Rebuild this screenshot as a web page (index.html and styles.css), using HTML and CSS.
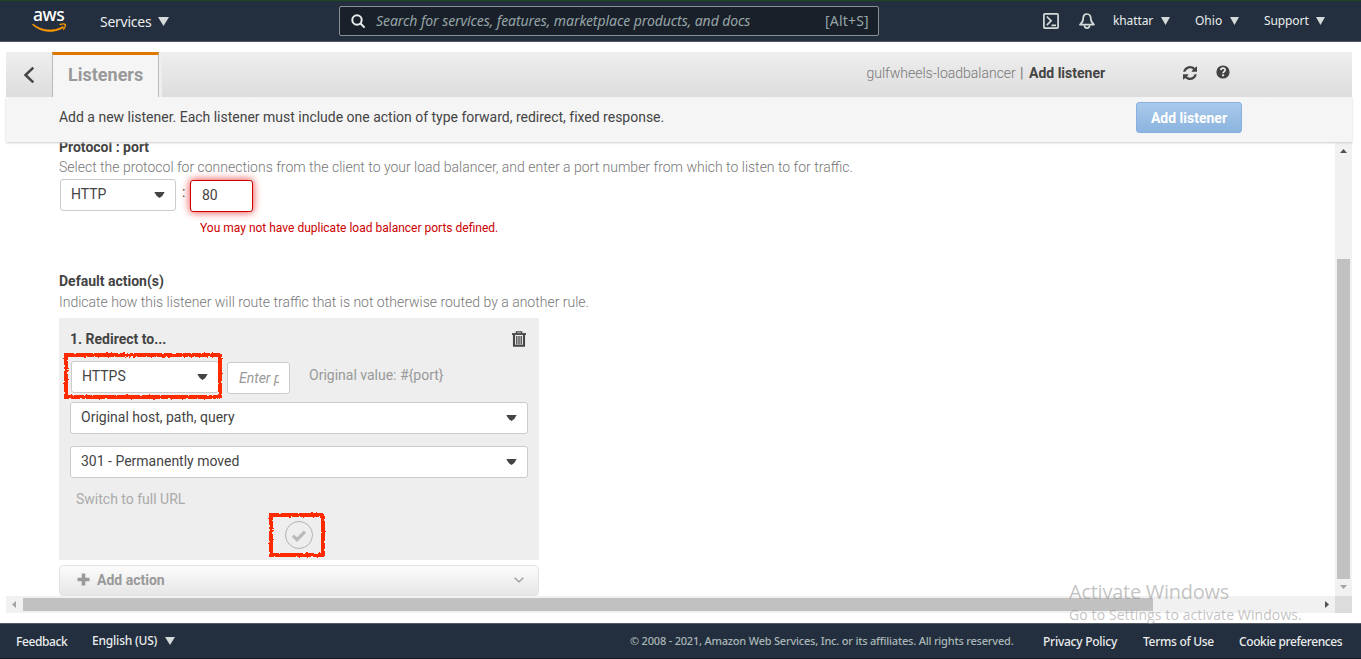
FILE: index.html
```html
<!DOCTYPE html>
<html lang="en">
<head>
<meta charset="utf-8">
<title>Add listener</title>
<link rel="stylesheet" href="styles.css">
</head>
<body>
<header class="topnav">
  <div class="logo"><span class="logo-word">aws</span>
    <svg class="smile" width="36" height="10" viewBox="0 0 36 10"><path d="M1 1C9 8 22 9 31 3.500L31.600 4.500C22 10.500 9 9.500 0.600 1.800Z" fill="#f90" stroke="#f90" stroke-width=".7"/><path d="M27.500 1.700C30 .9 32.500.7 33.200 1.400C33.700 2.400 32.700 5 31.300 6.800" fill="none" stroke="#f90" stroke-width="1.400"/></svg>
  </div>
  <div class="services"><span>Services</span><svg class="tri" width="11" height="9" viewBox="0 0 11 9"><path d="M0 0h11L5.500 9z"/></svg></div>
  <div class="search">
    <svg width="15" height="15" viewBox="0 0 15 15" fill="none" stroke="#eaeded" stroke-width="2"><circle cx="6" cy="6" r="4.700"/><path d="M9.300 9.300l4.300 4.300"/></svg>
    <span class="search-hint">Search for services, features, marketplace products, and docs</span>
    <span class="search-key">[Alt+S]</span>
  </div>
  <svg class="shell" width="16" height="16" viewBox="0 0 16 16" fill="none" stroke="#d5dbdb" stroke-width="1.700"><rect x=".9" y=".9" width="14.200" height="14.200" rx="1"/><path d="M3.800 3.500l4.300 4.300-4.300 4.300M8.500 12.300h4.500"/></svg>
  <svg class="bell" width="16" height="16" viewBox="0 0 16 16" fill="none" stroke="#d5dbdb" stroke-width="1.700" stroke-linejoin="round"><path d="M8 1C5.300 1 4.200 3.200 4.200 5.500C4.200 8.500 3 10 1 11.600h14C13 10 11.800 8.500 11.800 5.500C11.800 3.200 10.700 1 8 1z"/><path d="M5.400 12.300C5.400 16 10.600 16 10.600 12.300"/></svg>
  <div class="nav-item user"><span>khattar</span><svg class="tri" width="9" height="8" viewBox="0 0 11 9" preserveAspectRatio="none"><path d="M0 0h11L5.500 9z"/></svg></div>
  <div class="nav-item region"><span>Ohio</span><svg class="tri" width="9" height="8" viewBox="0 0 11 9" preserveAspectRatio="none"><path d="M0 0h11L5.500 9z"/></svg></div>
  <div class="nav-item support"><span>Support</span><svg class="tri" width="9" height="8" viewBox="0 0 11 9" preserveAspectRatio="none"><path d="M0 0h11L5.500 9z"/></svg></div>
</header>

<main class="panel">
  <div class="tabs">
    <div class="back"><svg width="12" height="18" viewBox="0 0 12 18"><path d="M10.300 1.700L2.500 9l7.800 7.300" fill="none" stroke="#444" stroke-width="2.500"/></svg></div>
    <div class="tab"><span>Listeners</span></div>
    <div class="crumbs"><span class="crumb-lb">gulfwheels-loadbalancer</span><span class="crumb-sep">|</span><b>Add listener</b></div>
    <svg class="refresh" width="14" height="14" viewBox="0 0 1536 1536"><path fill="#444" d="M1511 928q0 5-1 7-64 268-268 434.500T764 1536q-146 0-282.500-55T238 1324l-129 129q-19 19-45 19t-45-19-19-45V960q0-26 19-45t45-19h448q26 0 45 19t19 45-19 45l-137 137q71 66 161 102t187 36q134 0 250-65t186-179q11-17 53-117 8-23 30-23h192q13 0 22.500 9.500t9.500 22.500zm25-800v448q0 26-19 45t-45 19h-448q-26 0-45-19t-19-45 19-45l138-138Q969 256 768 256q-134 0-250 65T332 500q-11 17-53 117-8 23-30 23H50q-13 0-22.500-9.500T18 608v-7q65-268 270-434.500T768 0q146 0 284 55.500T1297 212l130-129q19-19 45-19t45 19 19 45z"/></svg>
    <svg class="help" width="14" height="14" viewBox="0 0 14 14"><circle cx="7" cy="7" r="6.600" fill="#444"/><path d="M4.800 5.100C5 2.500 9.300 2.600 9.100 5.200C9 6.700 7.100 6.600 7.100 8.300" fill="none" stroke="#ededed" stroke-width="1.700"/><rect x="6.100" y="9.400" width="2" height="1.800" fill="#ededed"/></svg>
  </div>
  <div class="intro"><p>Add a new listener. Each listener must include one action of type forward, redirect, fixed response.</p><button class="primary">Add listener</button></div>

  <div class="viewport">
    <section class="content">
      <h2 class="protocol-title">Protocol : port</h2>
      <p class="note">Select the protocol for connections from the client to your load balancer, and enter a port number from which to listen to for traffic.</p>
      <div class="protocol-row">
        <div class="select protocol"><span>HTTP</span><svg class="caret" width="11" height="6" viewBox="0 0 11 6"><path d="M.3 0h10.400Q9 4 5.500 6Q2 4 .3 0z"/></svg></div>
        <span class="colon">:</span>
        <div class="port-error">80</div>
      </div>
      <p class="error">You may not have duplicate load balancer ports defined.</p>
      <h2 class="actions-title">Default action(s)</h2>
      <p class="note actions-note">Indicate how this listener will route traffic that is not otherwise routed by a another rule.</p>
      <div class="action-card">
        <div class="card-head"><h3>1. Redirect to...</h3>
          <svg width="14" height="16" viewBox="0 0 14 16" fill="none" stroke="#444"><path d="M0 3h14" stroke-width="1.800"/><path d="M4.400 2.500V.9h5.200v1.600" stroke-width="1.300"/><path d="M2 3.500V14.800h10V3.500" stroke-width="2.100"/><path d="M4.800 5v8.500M7 5v8.500M9.200 5v8.500" stroke-width="1.300"/></svg>
        </div>
        <div class="redirect-row">
          <div class="select scheme"><span>HTTPS</span><svg class="caret" width="11" height="6" viewBox="0 0 11 6"><path d="M.3 0h10.400Q9 4 5.500 6Q2 4 .3 0z"/></svg>
            <svg class="mark mark-scheme" width="164" height="52"><rect x="5" y="5" width="154" height="42" filter="url(#rough)"/></svg>
          </div>
          <div class="port"><span>Enter p</span></div>
          <span class="original">Original value: #{port}</span>
        </div>
        <div class="select wide"><span>Original host, path, query</span><svg class="caret" width="11" height="6" viewBox="0 0 11 6"><path d="M.3 0h10.400Q9 4 5.500 6Q2 4 .3 0z"/></svg></div>
        <div class="select wide code"><span>301 - Permanently moved</span><svg class="caret" width="11" height="6" viewBox="0 0 11 6"><path d="M.3 0h10.400Q9 4 5.500 6Q2 4 .3 0z"/></svg></div>
        <div class="switch">Switch to full URL</div>
        <div class="confirm">
          <svg width="28" height="28" viewBox="0 0 28 28" fill="none"><circle cx="14" cy="14" r="13.500" stroke="#b3b3b3"/><path d="M7.900 14.600l4.100 4 8-8" stroke="#bbb" stroke-width="3.300"/></svg>
          <svg class="mark mark-confirm" width="62" height="50"><rect x="5" y="5" width="52" height="40" filter="url(#rough)"/></svg>
        </div>
      </div>
      <div class="add-action">
        <svg width="13" height="13" viewBox="0 0 13 13"><path d="M4.700.5h3.600v4.200h4.200v3.600H8.300v4.200H4.700V8.300H.5V4.700h4.200z" fill="#999"/></svg>
        <span>Add action</span>
        <svg class="chevron" width="10" height="6" viewBox="0 0 10 6"><path d="M.7.7L5 4.900 9.300.7" fill="none" stroke="#999" stroke-width="1.300"/></svg>
      </div>
    </section>
    <div class="vscroll"><svg width="7" height="4"><path d="M3.500 0L7 4H0z" fill="#505050"/></svg><div class="vthumb"></div><svg width="7" height="4"><path d="M0 0h7L3.500 4z" fill="#a3a3a3"/></svg></div>
  </div>
  <div class="hscroll"><svg class="left" width="4" height="7"><path d="M4 0v7L0 3.500z" fill="#a3a3a3"/></svg><div class="hthumb"></div><svg class="right" width="4" height="7"><path d="M0 0l4 3.500L0 7z" fill="#505050"/></svg><div class="corner"></div></div>
</main>

<footer class="footer">
  <span class="feedback">Feedback</span>
  <span class="language">English (US)</span><svg class="tri" width="10" height="8" viewBox="0 0 11 9" preserveAspectRatio="none"><path d="M0 0h11L5.500 9z"/></svg>
  <span class="copyright">© 2008 - 2021, Amazon Web Services, Inc. or its affiliates. All rights reserved.</span>
  <span class="privacy">Privacy Policy</span><span class="terms">Terms of Use</span><span class="cookies">Cookie preferences</span>
</footer>
<div class="watermark"><div class="wm-title">Activate Windows</div><div class="wm-text">Go to Settings to activate Windows.</div></div>
<svg class="defs" width="0" height="0"><filter id="rough" x="-10%" y="-20%" width="120%" height="140%"><feTurbulence type="fractalNoise" baseFrequency=".4" numOctaves="2" seed="4"/><feDisplacementMap in="SourceGraphic" scale="3" xChannelSelector="R" yChannelSelector="G"/></filter></svg>
</body>
</html>
```
FILE: styles.css
```css
* { box-sizing: border-box; }
body { margin: 0; width: 1361px; height: 659px; overflow: hidden; display: flex; flex-direction: column; background: #fff; color: #444; font: 14px/20px Roboto, sans-serif; }
h2, h3, p { margin: 0; font-size: 14px; line-height: 20px; white-space: nowrap; }
span, b { white-space: nowrap; }
svg { flex: none; display: block; }

.topnav { height: 42px; flex: none; display: flex; align-items: center; background: #232f3e; border-top: 1px solid #1d4620; border-bottom: 1px solid #545b64; color: #eaeded; font-family: "Noto Sans", sans-serif; }
.logo { width: 36px; height: 26px; margin-left: 32px; margin-top: -2px; display: flex; flex-direction: column; }
.logo-word { height: 17px; line-height: 14px; font-size: 17.5px; font-weight: 500; color: #fff; padding-left: 1px; letter-spacing: -.4px; }
.smile { margin-top: -1px; }
.services { width: 106px; margin-left: 32px; display: flex; align-items: center; font-size: 14px; }
.services span { width: 59px; letter-spacing: -.25px; margin-top: 1px; }
.services .tri { margin-left: -1px; }
.tri { fill: #d5dbdb; }
.search { width: 540px; height: 30px; margin-left: 133px; border: 1px solid #879196; border-radius: 2px; background: #1a202a; display: flex; align-items: center; color: #95a5a6; font-size: 14px; }
.search svg { margin-left: 11px; }
.search-hint { width: 449px; margin-left: 10px; font-style: italic; letter-spacing: -.07px; }
.search-key { letter-spacing: .2px; }
.shell { margin-left: 164px; }
.bell { margin-left: 20px; }
.nav-item { display: flex; align-items: center; justify-content: space-between; font-size: 12px; height: 20px; }
.user { width: 57px; margin-left: 18px; letter-spacing: -.1px; }
.region { width: 44px; margin-left: 25px; }
.support { width: 61px; margin-left: 25px; letter-spacing: -.1px; }

.panel { width: 1346px; height: 561px; margin: 10px 0 0 6px; flex: none; }
.tabs { position: relative; z-index: 3; height: 45px; display: flex; background: linear-gradient(#eee, #ddd); }
.back { width: 46px; display: flex; align-items: center; justify-content: center; }
.back svg { margin-top: 1px; }
.tab { width: 107px; height: 45px; padding: 10px 15px 0; background: #f5f5f5; border-left: 1px solid #bbb; border-right: 1px solid #bbb; border-top: 3px solid #e07700; box-shadow: 3px 0 #eee; font-size: 18px; font-weight: 700; color: #999; margin-right: 3px; }
.crumbs { margin-left: 704px; width: 317px; padding-top: 11px; display: flex; color: #777; font-weight: 300; }
.crumb-lb { width: 154px; padding-left: .5px; }
.crumb-sep { width: 9px; font-weight: 400; }
.crumbs b { color: #444; font-weight: 700; }
.refresh { margin-top: 14px; }
.help { margin: 13px 0 0 19px; }
.intro { position: relative; z-index: 2; height: 45px; display: flex; background: #f5f5f5; padding-left: 53px; box-shadow: 0 1px 2px #ccc; }
.intro p { padding-top: 10px; width: 1077px; letter-spacing: -.01px; }
.primary { width: 106px; height: 31px; margin-top: 5px; padding: 0; border: 1px solid #85b0df; border-radius: 3px; background: linear-gradient(#a9c9ea, #8bb4df); color: #fff; font: 700 14px/20px Roboto, sans-serif; }

.viewport { height: 454px; display: flex; overflow: hidden; }
.content { width: 1329px; padding-left: 53px; height: 454px; overflow: hidden; }
.protocol-title { margin-top: -5px; }
.note { color: #777; font-weight: 300; }
.protocol-row { display: flex; padding-left: 1px; margin-top: 2px; height: 34px; }
.select { position: relative; height: 32px; display: flex; align-items: center; justify-content: space-between; padding: 0 10px; border: 1px solid #ccc; border-radius: 3px; background: #fff; }
.select > span { margin-top: -2px; }
.caret { fill: #444; }
.protocol { width: 116px; }
.colon { width: 8px; margin: 3px 0 0 6px; }
.port-error { width: 63px; height: 32px; margin-top: 1px; padding: 3px 11px; border: 1px solid #c00; border-radius: 3px; box-shadow: 0 0 8px #e33; background: #fff; line-height: 22px; }
.error { margin: 5px 0 0 141px; font-size: 12px; color: #c00; }
.actions-title { margin-top: 33px; }
.actions-note { margin-top: 1px; }
.action-card { width: 480px; height: 242px; margin-top: 6px; padding: 11px 11px 0; background: #eee; }
.card-head { display: flex; justify-content: space-between; padding-right: 2px; }
.card-head svg { margin-top: 2px; }
.redirect-row { display: flex; margin-top: 12px; height: 34px; padding-left: 1px; }
.scheme { width: 148px; }
.port { width: 63px; height: 32px; margin: 1px 0 0 8px; padding: 5px 11px; border: 1px solid #ccc; border-radius: 3px; background: #fff; color: #999; font-style: italic; }
.port span { display: block; overflow: hidden; width: 40px; }
.original { color: #999; margin: 4px 0 0 19px; }
.wide { margin-top: 7px; width: 458px; }
.code { margin-top: 12px; }
.switch { color: #aaa; margin: 11px 0 0 6px; }
.confirm { position: relative; width: 28px; height: 28px; margin: 12px 0 0 215px; }
.mark { position: absolute; fill: none; stroke: #ff2a00; stroke-width: 4px; }
.mark-scheme { left: -11px; top: -12px; }
.mark-confirm { left: -19px; top: -11px; }
.add-action { width: 480px; height: 31px; margin-top: 5px; padding: 0 14px 2px 17px; display: flex; align-items: center; border: 1px solid #e3e3e3; border-radius: 4px; background: linear-gradient(#fcfcfc, #e6e6e6); color: #999; font-weight: 700; }
.add-action span { margin-left: 7px; }
.chevron { margin-left: auto; }

.vscroll { width: 17px; height: 454px; background: #f1f1f1; display: flex; flex-direction: column; align-items: center; padding-top: 7px; }
.vthumb { width: 13px; height: 320px; margin: 106px 0 6px; background: #c1c1c1; flex: none; }
.hscroll { height: 17px; display: flex; align-items: center; background: #f1f1f1; }
.left { margin-left: 6px; }
.hthumb { width: 1130px; height: 13px; margin-left: 7px; background: #c1c1c1; }
.right { margin-left: 172px; }
.corner { width: 17px; height: 17px; margin-left: auto; background: #dcdcdc; }

.footer { height: 36px; margin-top: 10px; flex: none; display: flex; align-items: center; background: #232f3e; border-top: 1px solid #545b64; border-bottom: 1px solid #15191d; color: #eaeded; font: 500 12px/20px "Noto Sans", sans-serif; }
.feedback { width: 76px; margin-left: 16px; margin-top: 2px; letter-spacing: -.4px; }
.language { width: 73px; letter-spacing: -.2px; }
.copyright { width: 413px; margin-left: 455px; color: #aab7b8; font-size: 11px; letter-spacing: -.2px; }
.privacy { width: 100px; margin-top: 2px; letter-spacing: -.25px; }
.terms { width: 96px; margin-top: 2px; letter-spacing: -.3px; }
.cookies { margin-top: 2px; letter-spacing: -.4px; }
.watermark { position: absolute; left: 1069px; top: 579px; color: rgba(145,145,145,.55); font-family: "Open Sans", sans-serif; font-weight: 400; white-space: nowrap; z-index: 3; }
.wm-title { font-size: 20px; line-height: 26px; letter-spacing: -.25px; }
.wm-text { font-size: 14px; line-height: 20px; letter-spacing: .1px; }
```
